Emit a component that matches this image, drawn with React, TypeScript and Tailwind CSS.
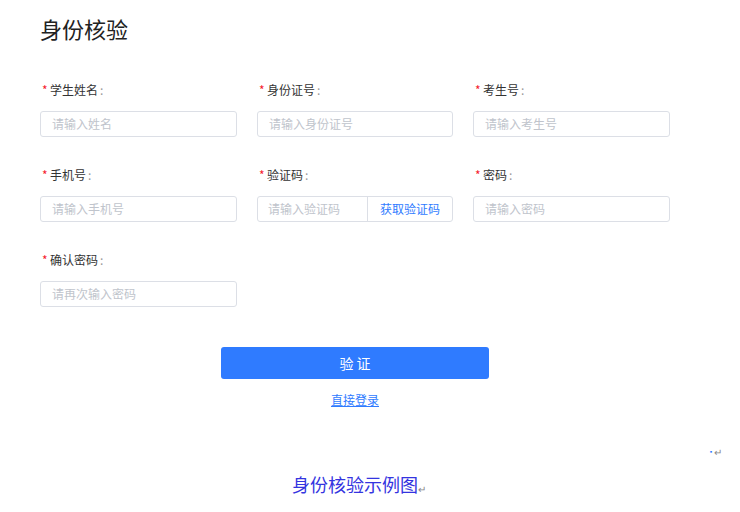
const fields = [
  { label: "学生姓名", placeholder: "请输入姓名" },
  { label: "身份证号", placeholder: "请输入身份证号" },
  { label: "考生号", placeholder: "请输入考生号" },
  { label: "手机号", placeholder: "请输入手机号" },
  { label: "验证码", placeholder: "请输入验证码", code: true },
  { label: "密码", placeholder: "请输入密码" },
  { label: "确认密码", placeholder: "请再次输入密码" },
];

const sans = { fontFamily: "'Noto Sans CJK SC', 'Noto Sans', sans-serif" };

export default function App() {
  return (
    <div className="w-[740px] h-[512px] bg-white overflow-hidden text-[#333]" style={sans}>
      <div className="pl-[40px]">
        <h1 className="mt-[13px] text-[22px] leading-[30px] font-normal text-[#222]">身份核验</h1>

        <div className="mt-[37px] grid grid-cols-[197px_196px_197px] gap-x-[20px] gap-y-[28px] w-[630px]">
          {fields.map((f) => (
            <div key={f.label}>
              <div className="h-5 flex items-center text-[12px] leading-5 mb-[11px]">
                <span className="text-[#f5222d] w-[10px] pl-[2px] text-[12px]">*</span>
                <span>{f.label}</span>
                <span className="text-[#999] ml-[2px]">:</span>
              </div>
              {f.code ? (
                <div className="h-[26px] flex border border-[#dcdfe6] rounded-[3px] text-[12px]">
                  <div className="w-[110px] flex items-center pl-[10px] text-[#c0c4cc] border-r border-[#dcdfe6]">
                    {f.placeholder}
                  </div>
                  <div className="flex-1 flex items-center justify-center text-[#2f7bff]">获取验证码</div>
                </div>
              ) : (
                <div className="h-[26px] flex items-center pl-[11px] border border-[#dcdfe6] rounded-[3px] text-[12px] text-[#c0c4cc]">
                  {f.placeholder}
                </div>
              )}
            </div>
          ))}
        </div>

        <div className="w-[630px] flex flex-col items-center mt-[40px]">
          <button className="w-[268px] h-[32px] bg-[#2f7bff] rounded-[3px] text-white text-[14px]">
            验 证
          </button>
          <a className="mt-[11px] text-[12px] leading-5 text-[#2f7bff] underline">直接登录</a>
        </div>
      </div>

      <div className="mt-[36px] flex justify-end pr-[18px] text-[10px] leading-[12px] text-[#888]">
        <span className="text-[#2f7bff] text-[6px]">▪</span>↵
      </div>

      <div className="mt-[14px] flex pl-[292px]">
        <span className="text-[18px] leading-[24px] text-[#3434e0]">身份核验示例图</span>
        <span className="text-[10px] text-[#888] self-end">↵</span>
      </div>
    </div>
  );
}
